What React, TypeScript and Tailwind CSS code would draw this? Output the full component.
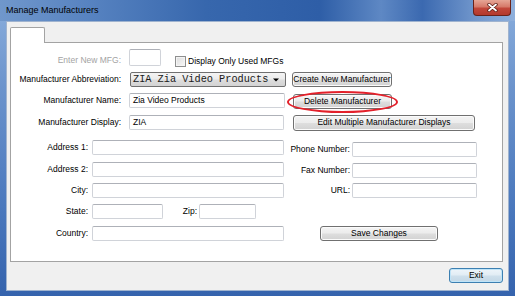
import React from "react";

function Input({ className = "", children }: { className?: string; children?: React.ReactNode }) {
  return (
    <div
      className={
        "bg-white border border-[#d0d3d9] border-t-[#aeb1b8] rounded-[2px] flex items-center pl-[3px] shrink-0 " +
        className
      }
    >
      {children}
    </div>
  );
}

function Btn({ className = "", children }: { className?: string; children?: React.ReactNode }) {
  return (
    <div
      className={
        "border border-[#707070] rounded-[3px] bg-[linear-gradient(180deg,#f4f4f4_0%,#ececec_48%,#dedede_52%,#d2d2d2_100%)] shadow-[inset_0_0_0_1px_#fbfbfb] flex items-center justify-center shrink-0 " +
        className
      }
    >
      {children}
    </div>
  );
}

export default function App() {
  return (
    <div className="w-[515px] h-[296px] flex flex-col overflow-hidden bg-[linear-gradient(180deg,#8aaedd_0%,#6b93cc_30%,#4a78bd_70%,#3563ad_100%)] font-['Liberation_Sans',Arial,sans-serif] text-[8.5px] leading-none text-black">
      {/* Title bar */}
      <div className="h-[21px] flex justify-between items-start bg-[linear-gradient(90deg,#7097cb_0%,#5682c0_18%,#3767ad_40%,#2e5ea7_62%,#5e88c4_74%,#3b69b0_82%,#6f95cb_92%,#8fb0dc_100%)]">
        <span className="ml-[6px] mt-[6px] text-[9px] text-black">Manage Manufacturers</span>
        <div className="mr-[4px] w-[38px] h-[16px] rounded-b-[4px] border border-t-0 border-[#6a2219] bg-[linear-gradient(180deg,#e6a696_0%,#d67a6a_45%,#c2473a_55%,#b3392d_100%)] flex items-center justify-center">
          <svg width="11" height="9" viewBox="0 0 11 9">
            <path d="M2 1.5 L9 7.5 M9 1.5 L2 7.5" stroke="#5a1c14" strokeWidth="3.4" strokeLinecap="round" />
            <path d="M2 1.5 L9 7.5 M9 1.5 L2 7.5" stroke="#ffffff" strokeWidth="1.8" strokeLinecap="round" />
          </svg>
        </div>
      </div>

      {/* Frame body */}
      <div className="flex-1 flex px-[6px] pb-[5px]">
        <div className="flex-1 flex flex-col bg-[#f0f0f0] border border-[#9fb3cf] pl-[3px] pr-[5px] pt-[5px] pb-[7px]">
          {/* Tab header */}
          <div className="w-[35px] h-[16px] bg-white border border-b-0 border-[#a3a3a3] rounded-t-[2px] relative z-10 -mb-px" />
          {/* Tab panel */}
          <div className="h-[220px] bg-white border border-[#a3a3a3] flex flex-col">
            {/* Row 1 */}
            <div className="mt-[6px] h-[17px] flex items-start">
              <span className="mt-[7px] w-[110px] text-right text-[#a3a3a3] shrink-0">Enter New MFG:</span>
              <Input className="ml-[8px] w-[32px] h-[17px]" />
              <div className="ml-[14px] mt-[7px] flex items-center">
                <div className="w-[11px] h-[11px] border border-[#8e8f8f] bg-[linear-gradient(135deg,#dcdcdc,#f7f7f7)] shadow-[inset_0_0_0_1px_#f4f4f4]" />
                <span className="ml-[2px]">Display Only Used MFGs</span>
              </div>
            </div>

            {/* Row 2 */}
            <div className="mt-[6px] h-[15px] flex items-center">
              <span className="w-[110px] text-right shrink-0">Manufacturer Abbreviation:</span>
              <div className="ml-[9px] w-[156px] h-[15px] border border-[#707070] rounded-[2px] bg-[linear-gradient(180deg,#f4f4f4_0%,#ebebeb_48%,#dddddd_52%,#d3d3d3_100%)] flex items-center justify-between pl-[2px] pr-[6px] shrink-0">
                <span className="font-['Liberation_Mono',monospace] text-[10.25px] leading-none text-[#1a1a1a]">ZIA Zia Video Products</span>
                <svg width="6" height="4" viewBox="0 0 6 4">
                  <path d="M0 0.5 L6 0.5 L3 3.5 Z" fill="#000" />
                </svg>
              </div>
              <Btn className="ml-[6px] w-[100px] h-[15px]">Create New Manufacturer</Btn>
            </div>

            {/* Row 3 */}
            <div className="mt-[6px] h-[15px] flex items-center">
              <span className="w-[110px] text-right shrink-0">Manufacturer Name:</span>
              <Input className="ml-[8px] w-[156px] h-[15px]">Zia Video Products</Input>
              <div className="ml-[8px] relative mt-[1px]">
                <Btn className="w-[99px] h-[15px]">Delete Manufacturer</Btn>
                <div className="absolute left-[-6px] top-[-3px] w-[111px] h-[22px] rounded-[50%] border-2 border-[#e3202a]" />
              </div>
            </div>

            {/* Row 4 */}
            <div className="mt-[6px] h-[16px] flex items-center">
              <span className="w-[110px] text-right shrink-0">Manufacturer Display:</span>
              <Input className="ml-[8px] w-[155px] h-[15px]">ZIA</Input>
              <Btn className="ml-[9px] w-[182px] h-[16px] mt-[1px]">Edit Multiple Manufacturer Displays</Btn>
            </div>

            {/* Address 1 */}
            <div className="mt-[10px] h-[15px] flex items-center">
              <span className="w-[77px] text-right shrink-0">Address 1:</span>
              <Input className="ml-[4px] w-[192px] h-[15px]" />
              <div className="flex items-center mt-[3px]">
                <span className="w-[66px] text-right shrink-0">Phone Number:</span>
                <Input className="ml-[2px] w-[125px] h-[15px]" />
              </div>
            </div>

            {/* Address 2 */}
            <div className="mt-[7px] h-[15px] flex items-center">
              <span className="w-[77px] text-right shrink-0">Address 2:</span>
              <Input className="ml-[4px] w-[192px] h-[15px]" />
              <div className="flex items-center mt-[2px]">
                <span className="w-[66px] text-right shrink-0">Fax Number:</span>
                <Input className="ml-[2px] w-[125px] h-[15px]" />
              </div>
            </div>

            {/* City */}
            <div className="mt-[6px] h-[15px] flex items-center">
              <span className="w-[77px] text-right shrink-0">City:</span>
              <Input className="ml-[4px] w-[192px] h-[15px]" />
              <div className="flex items-center">
                <span className="w-[66px] text-right shrink-0">URL:</span>
                <Input className="ml-[2px] w-[125px] h-[15px]" />
              </div>
            </div>

            {/* State / Zip */}
            <div className="mt-[6px] h-[15px] flex items-center">
              <span className="w-[77px] text-right shrink-0">State:</span>
              <Input className="ml-[4px] w-[71px] h-[15px]" />
              <span className="w-[34px] text-right shrink-0">Zip:</span>
              <Input className="ml-[2px] w-[57px] h-[15px]" />
            </div>

            {/* Country */}
            <div className="mt-[7px] h-[15px] flex items-center">
              <span className="w-[77px] text-right shrink-0">Country:</span>
              <Input className="ml-[4px] w-[192px] h-[15px]" />
              <Btn className="ml-[36px] w-[118px] h-[15px]">Save Changes</Btn>
            </div>
          </div>

          {/* Footer */}
          <div className="mt-[6px] flex justify-end">
            <div className="w-[54px] h-[15px] rounded-[3px] border border-[#3c7fb1] bg-[linear-gradient(180deg,#eef5fa_0%,#e1ecf4_48%,#cfe0ec_52%,#c3d7e6_100%)] shadow-[inset_0_0_0_1px_#bfe4f8] flex items-center justify-center">
              Exit
            </div>
          </div>
        </div>
      </div>
    </div>
  );
}
